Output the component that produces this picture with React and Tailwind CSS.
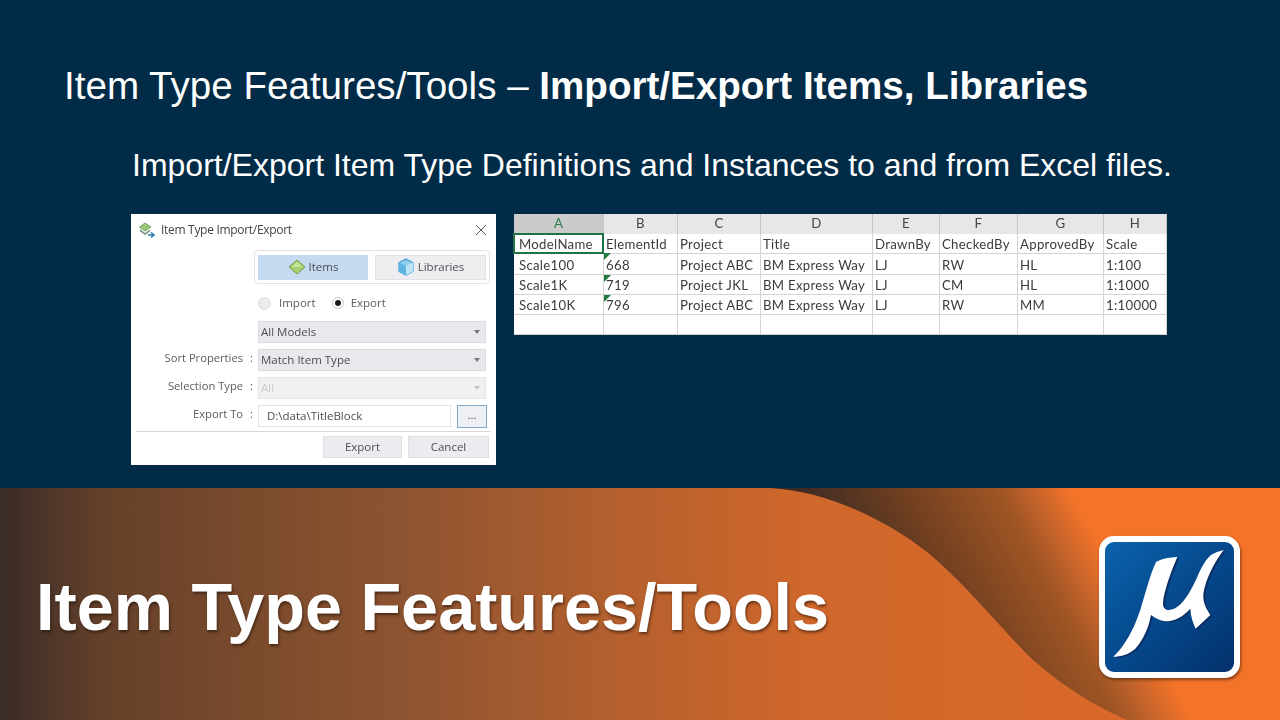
import React from 'react';

const columns = ['A', 'B', 'C', 'D', 'E', 'F', 'G', 'H'];
const rows = [
  ['ModelName', 'ElementId', 'Project', 'Title', 'DrawnBy', 'CheckedBy', 'ApprovedBy', 'Scale'],
  ['Scale100', '668', 'Project ABC', 'BM Express Way', 'LJ', 'RW', 'HL', '1:100'],
  ['Scale1K', '719', 'Project JKL', 'BM Express Way', 'LJ', 'CM', 'HL', '1:1000'],
  ['Scale10K', '796', 'Project ABC', 'BM Express Way', 'LJ', 'RW', 'MM', '1:10000'],
  ['', '', '', '', '', '', '', ''],
];

const MU = 'M228 126 C246 116 269 112 292 111 C272 158 252 213 249 248 C248 272 268 276 290 262 C318 242 336 205 352 170 C362 148 374 122 392 106 C404 98 418 93 431 90 C404 126 376 178 370 222 C368 248 380 268 391 285 L347 326 C339 308 332 290 331 266 C310 290 284 304 256 304 C239 302 226 294 213 285 C206 323 190 360 166 386 C146 404 122 410 100 410 C134 378 162 328 182 266 C196 221 208 170 228 126 Z';

function Diamond({ size = 18 }) {
  return (
    <svg width={size} height={size} viewBox="0 0 18 18">
      <path d="M9 2 L17 9 L9 16 L1 9 Z" fill="#a6d06e" stroke="#6f9f48" strokeWidth="1" />
      <path d="M9 4 L14 9 L9 9 L4 9 Z" fill="#c9e59b" />
    </svg>
  );
}

function Cube() {
  return (
    <svg width="18" height="18" viewBox="0 0 18 18">
      <path d="M9 1 L16 4.5 V13.5 L9 17 L2 13.5 V4.5 Z" fill="#8fd0ee" stroke="#3f9fd4" strokeWidth="1.2" />
      <path d="M9 8 L16 4.5 V13.5 L9 17 Z" fill="#bfe4f5" />
      <path d="M2 4.5 L9 8 V17 L2 13.5 Z" fill="#5fb4e0" />
    </svg>
  );
}

function DialogIcon() {
  return (
    <svg width="17" height="17" viewBox="0 0 17 17">
      <path d="M6 1 L12 5 L6 9 L0.5 5 Z" fill="#9cc87a" stroke="#5f8f55" strokeWidth="0.8" />
      <path d="M1 7 L6 11 L11 7.5 V9.5 L6 13 L1 9.5 Z" fill="#7a9a80" />
      <path d="M9 13 H14 M12 10.5 L15 13 L12 15.5" fill="none" stroke="#2c7fb8" strokeWidth="1.6" />
    </svg>
  );
}

function Caret({ light }) {
  return <span className={`w-0 h-0 border-x-[3px] border-x-transparent border-t-[4px] ${light ? 'border-t-[#c4c4c8]' : 'border-t-[#77777c]'}`} />;
}

function SelectBox({ label, disabled }) {
  return (
    <div className={`flex-1 h-[22px] flex items-center justify-between pl-[2px] pr-[5px] border ${disabled ? 'bg-[#f1f1f3] border-[#e4e4e6] text-[#c9c9cc]' : 'bg-[#e9e9ed] border-[#dcdce0] text-[#4d4d52]'}`}>
      <span>{label}</span>
      <Caret light={disabled} />
    </div>
  );
}

function FormRow({ label, children }) {
  return (
    <div className="flex items-center h-[22px]">
      <div className="w-[127px] pr-[5px] pb-[4px] flex justify-end gap-[7px] text-[11.2px] text-[#5c5c60]">
        {label && <span>{label}</span>}
        {label && <span>:</span>}
      </div>
      {children}
    </div>
  );
}

function ImportExportDialog() {
  return (
    <div className="w-[365px] h-[251px] bg-white flex flex-col text-[11.5px] leading-none text-[#4d4d52] blur-[0.3px] font-['Open_Sans',sans-serif] shrink-0">
      <div className="flex items-center justify-between h-[30px] mt-[1px] pl-[8px] pr-[9px]">
        <div className="flex items-center gap-[5px]">
          <DialogIcon />
          <span className="text-[12px] text-[#444448] tracking-[-0.3px]">Item Type Import/Export</span>
        </div>
        <svg width="12" height="12" viewBox="0 0 12 12">
          <path d="M1 1 L11 11 M11 1 L1 11" stroke="#555" strokeWidth="1" />
        </svg>
      </div>

      <div className="ml-[123px] mr-[6px] mt-[5px] h-[34px] border border-[#e2e2e6] rounded-[3px] flex items-center gap-[7px] px-[3px]">
        <div className="w-[110px] h-[25px] bg-[#c5d9f1] flex items-center justify-center gap-[3px]">
          <Diamond />
          <span>Items</span>
        </div>
        <div className="w-[111px] h-[25px] bg-[#eeeef1] border border-[#e2e2e6] flex items-center justify-center gap-[3px]">
          <Cube />
          <span>Libraries</span>
        </div>
      </div>

      <div className="ml-[127px] mt-[12px] h-[14px] flex items-center">
        <span className="w-[13px] h-[13px] rounded-full bg-[#ececee] border border-[#dddddf]" />
        <span className="ml-[8px] text-[#5c5c60]">Import</span>
        <span className="ml-[16px] w-[12px] h-[12px] rounded-full border border-[#c9c9cc] flex items-center justify-center">
          <span className="w-[6px] h-[6px] rounded-full bg-[#1a1a1e]" />
        </span>
        <span className="ml-[7px] text-[#5c5c60]">Export</span>
      </div>

      <div className="flex flex-col gap-[6px] mt-[11px] pr-[10px]">
        <FormRow>
          <SelectBox label="All Models" />
        </FormRow>
        <FormRow label="Sort Properties">
          <SelectBox label="Match Item Type" />
        </FormRow>
        <FormRow label="Selection Type">
          <SelectBox label="All" disabled />
        </FormRow>
        <FormRow label="Export To">
          <div className="flex-1 h-[22px] flex items-center pl-[8px] border border-[#e2e2e6]">D:\data\TitleBlock</div>
          <div className="w-[30px] h-[23px] ml-[6px] mr-[-1px] bg-[#eef0f3] border border-[#7fa9c9] flex items-center justify-center pb-[2px]">...</div>
        </FormRow>
      </div>

      <div className="mx-[5px] mt-[4px] border-t border-[#d8d8da]" />

      <div className="flex justify-end gap-[6px] mt-[4px] pr-[7px]">
        <div className="w-[79px] h-[22px] bg-[#ececf0] border border-[#e0e0e4] flex items-center justify-center">Export</div>
        <div className="w-[81px] h-[22px] bg-[#ececf0] border border-[#e0e0e4] flex items-center justify-center">Cancel</div>
      </div>
    </div>
  );
}

function Flag({ first }) {
  return (
    <svg width="7" height="7" viewBox="0 0 7 7" className={`absolute left-[0px] ${first ? 'top-[-1px]' : 'top-[0px]'}`}>
      <path d="M0 0 H7 L0 7 Z" fill="#1f7a3d" />
    </svg>
  );
}

function Sheet() {
  return (
    <div className="w-[653px] h-[121px] bg-white grid grid-cols-[90px_74px_83px_112px_67px_78px_86px_63px] grid-rows-[20px_20px_21px_20px_20px_20px] text-[13.2px] leading-none text-[#3c3c3c] tracking-[0.3px] blur-[0.3px] font-['Lato',sans-serif] shrink-0">
      {columns.map((col, i) => (
        <div
          key={col}
          className={`flex items-center justify-center border-r border-[#c8c8c8] ${i === 0 ? 'bg-[#cbcbcb] text-[#2f7a4f]' : 'bg-[#e7e7e7] text-[#444444]'}`}
        >
          {col}
        </div>
      ))}
      {rows.map((row, r) =>
        row.map((cell, c) => (
          <div key={`${r}-${c}`} className={`relative flex items-center pt-[3px] border-r border-b border-[#d4d4d4] ${c === 0 ? 'pl-[5px]' : 'pl-[2px]'}`}>
            {cell}
            {r === 0 && c === 0 && (
              <div className="absolute inset-[-1px] border-2 border-[#1f7246]" />
            )}
            {r === 1 && c === 1 && <Flag first />}
            {(r === 2 || r === 3) && c === 1 && <Flag />}
          </div>
        ))
      )}
    </div>
  );
}

function WaveBackground() {
  const wave = 'M0 0 H770 C830 3 890 35 927 64 C965 95 1000 140 1033 172 C1065 200 1095 218 1127 232 H0 Z';
  return (
    <svg className="absolute inset-0" width="1280" height="232" viewBox="0 0 1280 232">
      <defs>
        <linearGradient id="back" gradientUnits="userSpaceOnUse" x1="790" y1="0" x2="1008" y2="-115">
          <stop offset="0" stopColor="#3a2a24" />
          <stop offset="0.4" stopColor="#713f20" />
          <stop offset="0.75" stopColor="#a05524" />
          <stop offset="0.85" stopColor="#c0622b" />
          <stop offset="1" stopColor="#f37329" />
        </linearGradient>
        <linearGradient id="front" x1="0" y1="0" x2="1" y2="0" gradientUnits="objectBoundingBox">
          <stop offset="0" stopColor="#3a2c27" />
          <stop offset="0.09" stopColor="#64402a" />
          <stop offset="0.2" stopColor="#77492c" />
          <stop offset="0.36" stopColor="#8e5431" />
          <stop offset="0.55" stopColor="#b5602e" />
          <stop offset="0.72" stopColor="#d0672b" />
          <stop offset="1" stopColor="#da692a" />
        </linearGradient>
      </defs>
      <rect width="1280" height="232" fill="url(#back)" />
      <path d={wave} fill="url(#front)" />
    </svg>
  );
}

function Logo() {
  return (
    <div className="w-[141px] h-[142px] rounded-[15px] border-[6px] border-white bg-gradient-to-br from-[#0b63ad] to-[#03306c] shadow-[1px_2px_3px_rgba(60,30,10,0.6)] shrink-0">
      <svg width="129" height="130" viewBox="75 66 387 390">
        <path d={MU} fill="#0a2f66" transform="translate(6 3)" />
        <path d={MU} fill="#ffffff" />
      </svg>
    </div>
  );
}

export default function App() {
  return (
    <div className="w-[1280px] h-[720px] overflow-hidden bg-[#012b46] flex flex-col font-['Liberation_Sans',Arial,sans-serif]">
      <div className="h-[488px] flex flex-col">
        <h1 className="ml-[64px] mt-[62px] text-[38.6px] leading-[48px] text-white font-normal whitespace-nowrap">
          Item Type Features/Tools – <span className="font-bold">Import/Export Items, Libraries</span>
        </h1>
        <p className="ml-[132px] mt-[35px] text-[32px] leading-[40px] text-white whitespace-nowrap">
          Import/Export Item Type Definitions and Instances to and from Excel files.
        </p>
        <div className="flex items-start gap-[18px] ml-[131px] mt-[29px]">
          <ImportExportDialog />
          <Sheet />
        </div>
      </div>
      <div className="relative h-[232px]">
        <WaveBackground />
        <div className="relative h-full flex items-start justify-between pl-[36px] pr-[40px]">
          <h2 className="mt-[79px] text-[66.6px] leading-[80px] font-bold text-white whitespace-nowrap [text-shadow:1px_2px_3px_rgba(30,15,5,0.6)]">
            Item Type Features/Tools
          </h2>
          <div className="mt-[48px]">
            <Logo />
          </div>
        </div>
      </div>
    </div>
  );
}
